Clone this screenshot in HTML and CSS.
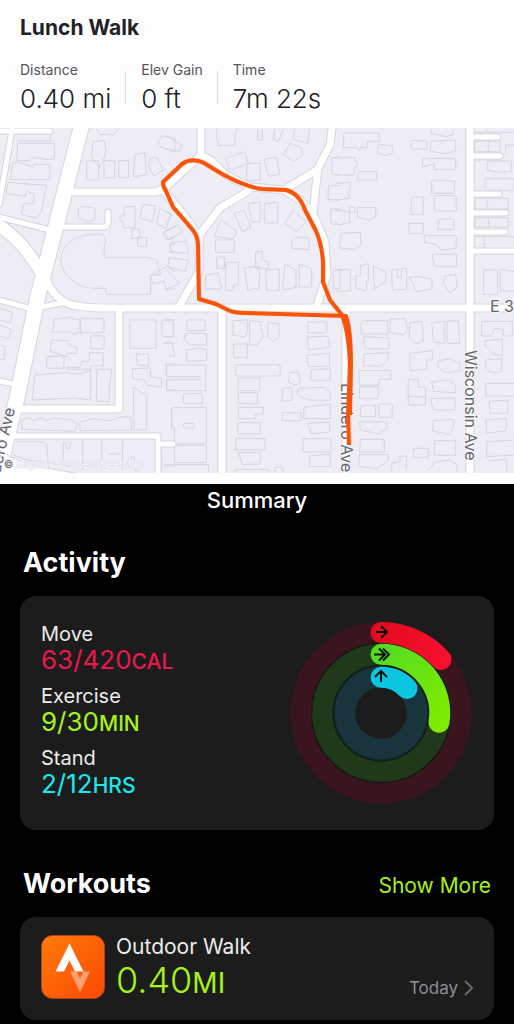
FILE: index.html
```html
<!DOCTYPE html>
<html lang="en">
<head>
    <meta charset="UTF-8">
    <meta name="viewport" content="width=device-width, initial-scale=1.0">
    <title>Lunch Walk</title>
    <link rel="stylesheet" href="styles.css">
</head>
<body>
    <section class="walk">
        <div class="walk-header">
            <h1>Lunch Walk</h1>
            <dl class="stats">
                <div class="stat">
                    <dt>Distance</dt>
                    <dd>0.40 mi</dd>
                </div>
                <div class="stat">
                    <dt>Elev Gain</dt>
                    <dd>0 ft</dd>
                </div>
                <div class="stat">
                    <dt>Time</dt>
                    <dd>7m 22s</dd>
                </div>
            </dl>
        </div>

        <svg class="map" viewBox="0 128 514 345" role="img" aria-label="Route map">
            <defs>
                <g id="roads">
                    <path class="w15" d="M82 124L37 300L17 398L5 445L-2 480"/>
                    <path class="w12" d="M-6 222C22 240 32 258 43 275"/>
                    <path class="w8" d="M42 270C50 290 56 300 72 305Q84 308 110 308H520"/>
                    <path class="w8" d="M222 308V480M346 308V480M470 120V480M119 308V409H15"/>
                    <path class="w8" d="M72 192H156L166 187L190 165L201 155L212 161L226 175L250 187L284 190L300 200L313 214L325 242L327 275L316 308"/>
                    <path class="w8" d="M201 120V155M284 190L317 170L330 145L333 120M318 168L313 212M250 190L220 208L200 234M163 190L184 215L199 236V272L178 308"/>
                    <path class="w5" d="M-5 131H50M12 130L-1 205M-5 216L50 230M-5 299L32 309L66 302M-5 380L18 385"/>
                    <path class="w5" d="M10 436H158V480M158 444H173"/>
                    <path class="w5" d="M64 227H103Q108 227 108 222V212"/>
                    <path class="w5" d="M470 137H498M470 156H500M470 194H499M470 213H506M470 232H505M470 251H520"/>
                </g>
            </defs>
            <rect class="land" x="0" y="128" width="514" height="345"/>

            <!-- buildings, one group per map tile -->
            <g class="buildings">
                <g transform="translate(0 125) scale(.3333)">
                    <path d="M53 55H163V103H128V99H88V107H50ZM38 112H55L72 117L100 127V118H150V164H32ZM25 172L90 178L140 180L124 262L108 280L64 268L72 235L102 236V208L80 198L76 214L18 206ZM50 48H152V28"/>
                    <path d="M280 50L312 46L318 75L313 97L298 128L275 95ZM260 107H296V165H260ZM312 107H344V159H312ZM356 107H386V157H356ZM405 88L435 84L439 150L400 155ZM450 100L470 96L490 134L462 154L446 125ZM485 32L525 42V82L472 62ZM290 12L300 28L340 30L354 12"/>
                    <path d="M235 250L252 244L285 250V282L265 290L235 280ZM372 245H405V308H370V290L360 287V273H372ZM428 238L466 242L458 290L420 280ZM480 252L515 268L498 310L470 295ZM395 312H418V340H395ZM413 338H440V364H413ZM488 325L525 302M488 325L502 345L525 338"/>
                    <path d="M310 328C225 322 184 360 183 405C185 450 230 490 285 490H318V508H452V450H482L470 405L442 398H313V355L318 350Z M450 452L500 425L525 440M450 452L460 478L492 468L500 495L525 490M525 355L508 360L515 380L525 378"/>
                </g>
                <g transform="translate(165 125) scale(.3333)">
                    <path d="M0 30L50 60L46 80L0 70M155 12V45H160V62H210V32L216 12M278 12V45H292V12M330 12L325 42L340 50L355 12M388 12L384 42L428 55L434 12M375 55L410 68L412 90L385 110L355 88ZM182 100L240 80L250 115L195 136ZM252 115H286V165L245 168V128ZM298 103L335 96L344 148L310 154Z"/>
                    <path d="M250 235L285 232V290H260ZM298 236L338 232V294H298ZM208 265L238 256L258 308L232 320ZM168 284L216 320L205 342L148 334ZM152 345H208V382H152ZM383 258L425 290L395 320L360 295ZM390 338H432V374L380 370V350ZM272 380H292V405L310 410V430H272ZM155 396H178V430H155ZM182 412H220V480H205V496H182ZM122 450L160 444L170 492H122ZM238 428L283 425V488L248 496ZM302 435L343 432V496H305ZM360 418L393 435V488L352 494ZM402 418L440 430V486H402Z"/>
                    <path d="M500 98L525 95M500 98L502 148H525M490 182H525M490 182V224H525M498 252H525M498 252V298H525M0 255L18 270L0 300M0 318L40 300L52 322L8 344ZM18 352L64 350L70 384L15 382ZM12 398L70 405L60 440L8 425ZM0 430L45 475L0 494M505 435H525V490H505Z"/>
                </g>
                <g transform="translate(335 125) scale(.3333)">
                    <path d="M27 24H133V50H98V68H75V76L65 68H25ZM130 58L172 62V85L150 92L128 84ZM0 100L60 97V108L66 112V128H58V150H0M72 140H125V165H66ZM0 175L45 172V192L38 205L46 218L0 228M0 255L42 260L45 292L12 300L0 290M45 245L60 248V262H42ZM68 248H122V275L100 286L68 276ZM18 325L76 322L78 360L60 374L14 368ZM2 434H46V498H2M76 422L100 416V470H94V498L62 490V452H76ZM115 425L152 440V470L118 492ZM170 435L215 430V492L172 496ZM188 434V458H200V434M222 456L250 455L290 462L292 492L240 500L235 475ZM330 452L362 448L366 488L345 504L325 476Z"/>
                    <path d="M230 46L275 48V72H228ZM288 48L362 46V78L330 86L286 78ZM288 12V25L330 34L355 30V12M262 100H362V134H298V116L262 126ZM290 165L358 168V205H290ZM298 212H364V258H298ZM232 216H265V268H228V240ZM222 295H265V326H222ZM312 282H356V314H308ZM268 332H364V370L318 376L305 358L268 352ZM292 388H365V424H298Z"/>
                    <path d="M420 48H495V80H418ZM460 48V80M458 108H530V138L495 142L458 136ZM450 160H537V196H450ZM418 105H500M420 220H520V252H420ZM460 222L455 250M420 278H520V306H420ZM460 278V306M418 335H537M448 335V368M445 435H488V508H445ZM496 432L537 440M496 432V498H537M418 22H537M455 12V22M512 60H537M512 60V92"/>
                </g>
                <g transform="translate(0 300) scale(.3333)">
                    <path d="M0 25L38 38L30 68L0 60M0 75L35 88L25 118L0 108M0 135L16 142L12 180L0 178M162 58L218 52V58H240V98H230V104L208 96H158ZM242 55H312V98H242ZM272 108H312V146H272ZM155 120L205 122V135L230 142V160H200V170L175 162L150 152ZM140 170L192 168V205L140 204ZM268 158H310V198H272V208H200V202H240L245 184H268ZM105 225L195 218L240 222L272 210V300L220 294L96 300ZM290 208H336L328 260V304H290Z"/>
                    <path d="M66 360L90 352L95 362L125 354L140 362L165 354L215 360L232 372L225 394L65 388ZM240 366L280 356L330 362L365 350L392 352L395 390L240 392ZM48 424H112L140 430L145 505M190 424V500M248 420V510M305 420V505M368 420V510M195 425L200 445H210V425M325 462H362M385 490Q388 470 402 470L408 515M40 465L80 480L150 490L220 500"/>
                    <path d="M390 60H468V145H390ZM486 60H525M486 60V110H525M408 162H446V198L412 195ZM398 206L452 204V230L485 236V262L440 255L435 240L398 236ZM400 262L440 285V390H402ZM490 130H525M498 192H525M498 192V226M500 240H525M500 240V270H525M515 322V390M485 448V510M490 498H525"/>
                </g>
                <g transform="translate(165 300) scale(.3333)">
                    <path d="M0 60H25V110H0M66 60H120V92H66ZM62 100H125V135H75L56 118ZM64 150L105 144L125 150V182L66 184ZM5 195H122V272H5V238H105V230H5ZM55 282L112 280V310H55ZM20 323H124V432H28V380H20ZM56 370H87V384H56ZM28 436H124V488H28ZM0 494H130V518M0 125H20L30 168H12"/>
                    <path d="M204 62L248 60V92L240 110L204 106ZM254 62L285 65L294 112L276 135H254ZM308 68L342 72V112L325 124L308 110ZM206 132H247V172H206ZM212 194H345V228H212ZM220 234H284V272H218ZM220 278H278V312L220 310ZM220 322H295V342H272V356H220ZM218 368H286V402H218ZM212 416H300V450H212ZM220 458H286V492L232 494ZM210 518V508H310V518M330 518V502H354V518"/>
                    <path d="M428 66H486V98H428ZM426 112L488 108L495 142L432 150ZM424 166L494 160V198L432 200ZM440 210L496 206V242L436 240ZM375 218L400 215L406 245L392 256L370 246ZM355 265L380 262L382 300L350 305ZM398 265L480 262L496 278V300H430L398 285ZM352 338H408V362H352ZM416 322L496 312V356H416ZM428 370L494 366V396L440 402ZM414 416H498V456H414ZM434 468L496 462V500H434Z"/>
                </g>
                <g transform="translate(335 300) scale(.3333)">
                    <path d="M82 62H158V102H78V78ZM166 58L212 56L218 92L205 104L164 98ZM85 110L162 114V146H90ZM88 162L160 158V178L140 198H85ZM72 212H168V238H132V255H72ZM74 260H130V295H74ZM78 318L122 315V350H75ZM132 312H172V352H132ZM74 366H156V385L130 402L76 390ZM76 418H148V456H74ZM72 464H160V482L125 505L72 500ZM170 515V490L195 485V468H214V510"/>
                    <path d="M225 68L260 64L266 122L245 132L222 110ZM290 68L328 64V132L295 125ZM336 64L370 62L374 130H336ZM225 160L292 152V180H275V208L225 212ZM310 182L345 176L374 190V214L330 218L308 200ZM220 238H250V262H272V315H220ZM220 290H272M290 245L345 240L362 258V278L295 274ZM286 296L360 294V330H296ZM295 362L355 358V382L345 404L292 392ZM235 445H280V472H235ZM298 422H362V466H298ZM278 512L300 486L345 480L366 496V516"/>
                    <path d="M440 64H532V108H505V88L480 85L470 108H440ZM450 122L502 118V165H480L452 142ZM452 180L500 176V214L480 220L452 210ZM452 250H537M452 250V288H537M462 304L518 300V340H466ZM452 360L514 355V392L455 400ZM455 425L537 420M455 425V470L537 465M460 482L515 478V515"/>
                </g>
            </g>

            <use href="#roads" class="road-edge"/>
            <use href="#roads" class="road"/>
            <path class="ground" d="M0 450L11 457L30 465L80 474H0Z"/>

            <g class="street-names">
                <text x="490" y="312">E 3</text>
                <text transform="translate(465 350) rotate(90)">Wisconsin Ave</text>
                <text transform="translate(341 383) rotate(90)">Lindero Ave</text>
                <text transform="translate(15 409) rotate(-77)" text-anchor="end">dero Ave</text>
            </g>
            <text class="credit" x="4" y="468"><tspan class="credit-mark">©</tspan> Mapbox © OpenStreetMap</text>

            <path class="route-glow" d="M349 445L350 365Q350 333 342 315L330 300L323 282V262Q322 245 316 231L305 210Q299 193 286 190L262 189Q246 187 222 174L204 163Q192 157 182 164L163 182Q163 187 166 191L173 207L192 229Q198 236 198 245L199 299L216 304L228 310Q234 313 245 313L341 315Q349 322 350 350"/>
            <path class="route" d="M349 445L348 415L350 365Q349 333 342 315L330 300L323 282V262Q322 245 316 231L305 210Q299 193 286 190L262 189Q246 187 222 174L204 163Q192 157 182 164L163 182Q163 187 166 191L173 207L192 229Q198 236 198 245L199 299L216 304L228 310Q234 313 245 313L346 316Q351 330 351 365L350 415"/>
        </svg>
    </section>

    <main class="summary">
        <h2 class="summary-title">Summary</h2>

        <div class="section-head">
            <h3>Activity</h3>
        </div>
        <div class="card activity">
            <dl class="goals">
                <dt>Move</dt>
                <dd class="move">63/420<span>CAL</span></dd>
                <dt>Exercise</dt>
                <dd class="exercise">9/30<span>MIN</span></dd>
                <dt>Stand</dt>
                <dd class="stand">2/12<span>HRS</span></dd>
            </dl>
            <svg class="rings" viewBox="-91 -91 182 182" role="img" aria-label="Activity rings">
                <defs>
                    <linearGradient id="red" x1="0" y1="0" x2="1" y2="0">
                        <stop offset="0" stop-color="#e60a1e"/>
                        <stop offset="1" stop-color="#f5102f"/>
                    </linearGradient>
                    <linearGradient id="green" x1="0" y1="0" x2="1" y2="1">
                        <stop offset="0" stop-color="#55dc22"/>
                        <stop offset="1" stop-color="#7dec00"/>
                    </linearGradient>
                </defs>
                <circle r="70" fill="#141a12"/>
                <circle class="track" r="80" stroke="#3b151e"/>
                <circle class="track" r="59" stroke="#20391a"/>
                <circle class="track" r="36" stroke="#19343d"/>
                <circle r="69.5" fill="none" stroke="#171713" stroke-width="1.5"/>
                <circle r="47.5" fill="none" stroke="#11201a" stroke-width="1.5"/>
                <circle r="25" fill="#1c1c1c"/>
                <path class="arc" stroke="url(#red)" d="M0 -80.5A80.5 80.5 0 0 1 60 -53.5"/>
                <path class="arc" stroke="url(#green)" d="M0 -58.7A58.7 58.7 0 0 1 58 9.3"/>
                <path class="arc" stroke="#0cc5e0" d="M0 -35.7A35.7 35.7 0 0 1 26 -24.5"/>
                <path class="arrow" d="M-5 -81H5M0 -87L6 -81L0 -75M-7 -58.5H3M-2 -64.5L4 -58.5L-2 -52.5M2 -64.5L8 -58.5L2 -52.5M0 -31V-41M-6 -36L0 -42L6 -36"/>
            </svg>
        </div>

        <div class="section-head">
            <h3>Workouts</h3>
            <a href="#" class="more">Show More</a>
        </div>
        <a href="#" class="card workout">
            <svg class="app-icon" viewBox="0 0 64 64" aria-hidden="true">
                <defs>
                    <linearGradient id="orange" x1="0" y1="0" x2="1" y2="1">
                        <stop offset="0" stop-color="#ff7c08"/>
                        <stop offset="1" stop-color="#fb4805"/>
                    </linearGradient>
                </defs>
                <rect x=".5" y=".5" width="63" height="63" rx="11" fill="url(#orange)" stroke="#a8431a"/>
                <path d="M29 36.500H35.500L39 43.500L42.500 36.500H49L39 57Z" fill="#ff9f73"/>
                <path d="M28.500 8.500L42.500 36.500H34L28.500 25.500L23 36.500H14.500Z" fill="#fff"/>
            </svg>
            <div class="workout-info">
                <span class="workout-name">Outdoor Walk</span>
                <span class="workout-distance">0.40<span>MI</span></span>
            </div>
            <span class="workout-date">Today
                <svg class="chevron" viewBox="0 0 9 16" aria-hidden="true"><path d="M1 1L8 8L1 15"/></svg>
            </span>
        </a>
    </main>
</body>
</html>
```
FILE: styles.css
```css
* {
    margin: 0;
    padding: 0;
    box-sizing: border-box;
}

body {
    font-family: Inter, "Liberation Sans", sans-serif;
    background: #000;
    color: #fff;
}

a {
    color: inherit;
    text-decoration: none;
}

/* walk */
.walk {
    background: #fdfdfd;
    color: #222226;
    padding-bottom: 11px;
}

.walk-header {
    padding: 14px 20px 12px;
}

.walk-header h1 {
    font-size: 21px;
    line-height: 28px;
    font-weight: 700;
}

.stats {
    display: flex;
    margin-top: 18px;
}

.stat {
    position: relative;
    padding-right: 15px;
    margin-right: 15px;
}

.stat:not(:last-child)::after {
    content: "";
    position: absolute;
    right: 0;
    top: 11px;
    bottom: 12px;
    width: 1px;
    background: #dcdce0;
}

.stat dt {
    font-size: 14px;
    line-height: 20px;
    color: #55555a;
}

.stat dd {
    padding-top: 2px;
    font-size: 26px;
    line-height: 34px;
    font-weight: 300;
}

/* map */
.map {
    display: block;
    width: 100%;
    height: auto;
}

.land {
    fill: #eeedf5;
}

.ground {
    fill: #fdfdfd;
    stroke: #d5d4df;
}

.buildings {
    fill: none;
    stroke: #d6d5de;
    stroke-width: 3;
}

.road,
.road-edge {
    fill: none;
    stroke-linejoin: round;
}

.road {
    stroke: #fff;
    --edge: 0px;
}

.road-edge {
    stroke: #d5d4df;
    --edge: 2px;
}

.w5 { stroke-width: calc(5px + var(--edge)); stroke-linecap: round; }
.w8 { stroke-width: calc(7px + var(--edge)); }
.w12 { stroke-width: calc(12px + var(--edge)); }
.w15 { stroke-width: calc(15px + var(--edge)); }

.street-names {
    font-size: 16px;
    fill: #66666e;
    stroke: #f6f6fa;
    stroke-width: 2px;
    paint-order: stroke;
}

.credit {
    font-size: 10px;
    fill: #f8f8fb;
    stroke: #dddce4;
    stroke-width: 1px;
    paint-order: stroke;
}

.credit-mark {
    fill: #66666e;
}

.route,
.route-glow {
    fill: none;
    stroke: #f9540b;
    stroke-width: 4px;
    stroke-linejoin: round;
}

.route-glow {
    stroke: #fdd9c4;
    stroke-width: 5px;
}

/* summary */
.summary {
    padding: 0 20px 4px;
}

.summary-title {
    font-size: 22px;
    line-height: 32px;
    font-weight: 500;
    text-align: center;
}

.section-head {
    display: flex;
    justify-content: space-between;
    align-items: baseline;
    padding: 28px 3px 14px;
}

.section-head h3 {
    font-size: 27px;
    line-height: 38px;
    font-weight: 700;
}

.more {
    font-size: 21px;
    color: #a6f21d;
}

.card {
    display: flex;
    background: #1c1c1c;
    border-radius: 16px;
}

.activity {
    justify-content: space-between;
    margin-bottom: 35px;
    padding: 26px 22px 26px 21px;
}

.activity + .section-head {
    padding-top: 0;
}

.goals dt {
    font-size: 20px;
    line-height: 25px;
    color: #ececec;
}

.goals dd {
    font-size: 26px;
    line-height: 26px;
    margin-bottom: 11px;
}

.goals dd:last-child {
    margin-bottom: 0;
}

.goals span {
    font-size: 21px;
    line-height: 16px;
    font-weight: 500;
}

.move { color: #e9184f; }
.exercise { color: #a6f21d; }
.stand { color: #1be8ea; }

.rings {
    width: 182px;
    height: 182px;
}

.track,
.arc {
    fill: none;
    stroke-width: 21px;
    stroke-linecap: round;
}

.arrow {
    fill: none;
    stroke: #0b1408;
    stroke-width: 2px;
}

.workout {
    gap: 11px;
    padding: 18px 21px;
}

.app-icon {
    width: 64px;
    height: 64px;
}

.workout-info {
    flex: 1;
}

.workout-name,
.workout-distance {
    display: block;
}

.workout-name {
    font-size: 21px;
    line-height: 24px;
    color: #ececec;
}

.workout-distance {
    font-size: 36px;
    line-height: 43px;
    font-weight: 300;
    color: #a6f21d;
}

.workout-distance span {
    font-size: 28px;
    line-height: 28px;
    font-weight: 400;
}

.workout-date {
    align-self: flex-end;
    display: flex;
    align-items: center;
    gap: 6px;
    padding-bottom: 2px;
    font-size: 17px;
    line-height: 24px;
    color: #8e8e96;
}

.chevron {
    width: 9px;
    height: 16px;
    fill: none;
    stroke: #6a6a6e;
    stroke-width: 2px;
}
```
